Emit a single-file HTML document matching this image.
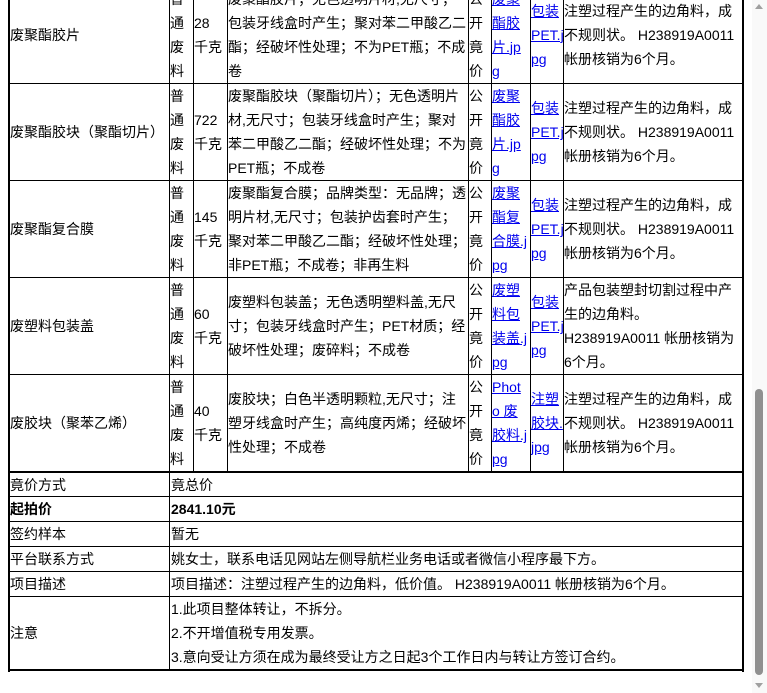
<!DOCTYPE html>
<html><head><meta charset="utf-8"><style>
*{margin:0;padding:0;box-sizing:border-box}
body{width:767px;height:693px;overflow:hidden;background:#fff;position:relative;font-family:"Liberation Sans","Noto Sans CJK SC",sans-serif;font-size:14px;color:#000}
.c{position:absolute;display:flex;flex-direction:column;justify-content:center;line-height:24px;white-space:nowrap;overflow:visible}
.v{position:absolute;background:#000;width:1px;z-index:2}
.h{position:absolute;background:#000;height:1px;z-index:2}
a{color:#00e;text-decoration:underline}
b{font-weight:bold}
</style></head><body>
<div class="v" style="left:8px;top:0;height:672px;width:2px"></div>
<div class="v" style="left:169px;top:0;height:671px"></div>
<div class="v" style="left:193px;top:0;height:472px"></div>
<div class="v" style="left:227px;top:0;height:472px"></div>
<div class="v" style="left:468px;top:0;height:472px"></div>
<div class="v" style="left:491px;top:0;height:472px"></div>
<div class="v" style="left:530px;top:0;height:472px"></div>
<div class="v" style="left:563px;top:0;height:472px"></div>
<div class="v" style="left:742px;top:0;height:672px;width:2px"></div>
<div class="h" style="left:8px;top:83px;width:736px"></div>
<div class="h" style="left:8px;top:180px;width:736px"></div>
<div class="h" style="left:8px;top:277px;width:736px"></div>
<div class="h" style="left:8px;top:374px;width:736px"></div>
<div class="h" style="left:8px;top:471px;width:736px;height:2px"></div>
<div class="h" style="left:8px;top:496px;width:736px"></div>
<div class="h" style="left:8px;top:521px;width:736px"></div>
<div class="h" style="left:8px;top:546px;width:736px"></div>
<div class="h" style="left:8px;top:571px;width:736px"></div>
<div class="h" style="left:8px;top:596px;width:736px"></div>
<div class="h" style="left:8px;top:669px;width:736px;height:2px"></div>

<div class="c" style="left:10px;top:-14px;width:158px;height:97px">废聚酯胶片</div>
<div class="c" style="left:170px;top:-14px;width:23px;height:97px">普<br>通<br>废<br>料</div>
<div class="c" style="left:194px;top:-14px;width:33px;height:97px">28<br>千克</div>
<div class="c" style="left:228px;top:-14px;width:240px;height:97px">废聚酯胶片；无色透明片材,无尺寸；<br>包装牙线盒时产生；聚对苯二甲酸乙二<br>酯；经破坏性处理；不为PET瓶；不成<br>卷</div>
<div class="c" style="left:469px;top:-14px;width:22px;height:97px">公<br>开<br>竟<br>价</div>
<div class="c" style="left:492px;top:-14px;width:38px;height:97px"><a>废聚<br>酯胶<br>片.jp<br>g</a></div>
<div class="c" style="left:531px;top:-14px;width:32px;height:97px"><a>包装<br>PET.j<br>pg</a></div>
<div class="c" style="left:564px;top:-14px;width:178px;height:97px">注塑过程产生的边角料，成<br>不规则状。 H238919A0011<br>帐册核销为6个月。</div>

<div class="c" style="left:10px;top:84px;width:158px;height:96px">废聚酯胶块（聚酯切片）</div>
<div class="c" style="left:170px;top:84px;width:23px;height:96px">普<br>通<br>废<br>料</div>
<div class="c" style="left:194px;top:84px;width:33px;height:96px">722<br>千克</div>
<div class="c" style="left:228px;top:84px;width:240px;height:96px">废聚酯胶块（聚酯切片）；无色透明片<br>材,无尺寸；包装牙线盒时产生；聚对<br>苯二甲酸乙二酯；经破坏性处理；不为<br>PET瓶；不成卷</div>
<div class="c" style="left:469px;top:84px;width:22px;height:96px">公<br>开<br>竟<br>价</div>
<div class="c" style="left:492px;top:84px;width:38px;height:96px"><a>废聚<br>酯胶<br>片.jp<br>g</a></div>
<div class="c" style="left:531px;top:84px;width:32px;height:96px"><a>包装<br>PET.j<br>pg</a></div>
<div class="c" style="left:564px;top:84px;width:178px;height:96px">注塑过程产生的边角料，成<br>不规则状。 H238919A0011<br>帐册核销为6个月。</div>

<div class="c" style="left:10px;top:181px;width:158px;height:96px">废聚酯复合膜</div>
<div class="c" style="left:170px;top:181px;width:23px;height:96px">普<br>通<br>废<br>料</div>
<div class="c" style="left:194px;top:181px;width:33px;height:96px">145<br>千克</div>
<div class="c" style="left:228px;top:181px;width:240px;height:96px">废聚酯复合膜；品牌类型：无品牌；透<br>明片材,无尺寸；包装护齿套时产生；<br>聚对苯二甲酸乙二酯；经破坏性处理；<br>非PET瓶；不成卷；非再生料</div>
<div class="c" style="left:469px;top:181px;width:22px;height:96px">公<br>开<br>竟<br>价</div>
<div class="c" style="left:492px;top:181px;width:38px;height:96px"><a>废聚<br>酯复<br>合膜.j<br>pg</a></div>
<div class="c" style="left:531px;top:181px;width:32px;height:96px"><a>包装<br>PET.j<br>pg</a></div>
<div class="c" style="left:564px;top:181px;width:178px;height:96px">注塑过程产生的边角料，成<br>不规则状。 H238919A0011<br>帐册核销为6个月。</div>

<div class="c" style="left:10px;top:278px;width:158px;height:96px">废塑料包装盖</div>
<div class="c" style="left:170px;top:278px;width:23px;height:96px">普<br>通<br>废<br>料</div>
<div class="c" style="left:194px;top:278px;width:33px;height:96px">60<br>千克</div>
<div class="c" style="left:228px;top:278px;width:240px;height:96px">废塑料包装盖；无色透明塑料盖,无尺<br>寸；包装牙线盒时产生；PET材质；经<br>破坏性处理；废碎料；不成卷</div>
<div class="c" style="left:469px;top:278px;width:22px;height:96px">公<br>开<br>竟<br>价</div>
<div class="c" style="left:492px;top:278px;width:38px;height:96px"><a>废塑<br>料包<br>装盖.j<br>pg</a></div>
<div class="c" style="left:531px;top:278px;width:32px;height:96px"><a>包装<br>PET.j<br>pg</a></div>
<div class="c" style="left:564px;top:278px;width:178px;height:96px">产品包装塑封切割过程中产<br>生的边角料。<br>H238919A0011 帐册核销为<br>6个月。</div>

<div class="c" style="left:10px;top:375px;width:158px;height:96px">废胶块（聚苯乙烯）</div>
<div class="c" style="left:170px;top:375px;width:23px;height:96px">普<br>通<br>废<br>料</div>
<div class="c" style="left:194px;top:375px;width:33px;height:96px">40<br>千克</div>
<div class="c" style="left:228px;top:375px;width:240px;height:96px">废胶块；白色半透明颗粒,无尺寸；注<br>塑牙线盒时产生；高纯度丙烯；经破坏<br>性处理；不成卷</div>
<div class="c" style="left:469px;top:375px;width:22px;height:96px">公<br>开<br>竟<br>价</div>
<div class="c" style="left:492px;top:375px;width:38px;height:96px"><a>Phot<br>o 废<br>胶料.j<br>pg</a></div>
<div class="c" style="left:531px;top:375px;width:32px;height:96px"><a>注塑<br>胶块.<br>jpg</a></div>
<div class="c" style="left:564px;top:375px;width:178px;height:96px">注塑过程产生的边角料，成<br>不规则状。 H238919A0011<br>帐册核销为6个月。</div>

<div class="c" style="left:10px;top:473px;width:158px;height:23px">竟价方式</div>
<div class="c" style="left:171px;top:473px;width:570px;height:23px">竟总价</div>
<div class="c" style="left:10px;top:497px;width:158px;height:24px"><b>起拍价</b></div>
<div class="c" style="left:171px;top:497px;width:570px;height:24px"><b>2841.10元</b></div>
<div class="c" style="left:10px;top:522px;width:158px;height:24px">签约样本</div>
<div class="c" style="left:171px;top:522px;width:570px;height:24px">暂无</div>
<div class="c" style="left:10px;top:547px;width:158px;height:24px">平台联系方式</div>
<div class="c" style="left:171px;top:547px;width:570px;height:24px">姚女士，联系电话见网站左侧导航栏业务电话或者微信小程序最下方。</div>
<div class="c" style="left:10px;top:572px;width:158px;height:24px">项目描述</div>
<div class="c" style="left:171px;top:572px;width:570px;height:24px">项目描述：注塑过程产生的边角料，低价值。 H238919A0011 帐册核销为6个月。</div>
<div class="c" style="left:10px;top:597px;width:158px;height:72px">注意</div>
<div class="c" style="left:171px;top:597px;width:570px;height:72px">1.此项目整体转让，不拆分。<br>2.不开增值税专用发票。<br>3.意向受让方须在成为最终受让方之日起3个工作日内与转让方签订合约。</div>

<div style="position:absolute;left:752px;top:0;width:15px;height:693px;background:#f9f9f9;z-index:3"></div>
<div style="position:absolute;left:755px;top:4px;width:0;height:0;border-left:4px solid transparent;border-right:4px solid transparent;border-bottom:5px solid #a0a0a0;z-index:4"></div>
<div style="position:absolute;left:755px;top:389px;width:8px;height:286px;background:#909090;border-radius:4px;z-index:4"></div>
<div style="position:absolute;left:755px;top:683px;width:0;height:0;border-left:4px solid transparent;border-right:4px solid transparent;border-top:5px solid #a0a0a0;z-index:4"></div>
</body></html>
